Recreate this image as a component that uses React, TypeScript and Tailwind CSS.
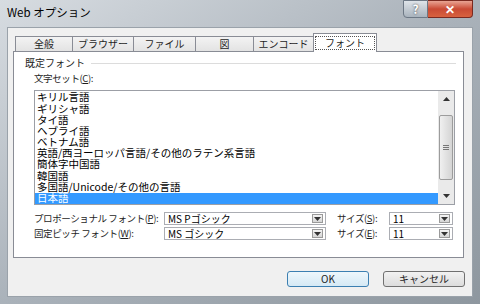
import React from "react";

const font = { fontFamily: '"Noto Sans CJK JP", "Noto Sans", sans-serif' };

const charsets = [
  "キリル言語",
  "ギリシャ語",
  "タイ語",
  "ヘブライ語",
  "ベトナム語",
  "英語/西ヨーロッパ言語/その他のラテン系言語",
  "簡体字中国語",
  "韓国語",
  "多国語/Unicode/その他の言語",
  "日本語",
];

const tabs = [
  { label: "全般", w: "w-[58px]" },
  { label: "ブラウザー", w: "w-[62px]" },
  { label: "ファイル", w: "w-[63px]" },
  { label: "図", w: "w-[59px]" },
  { label: "エンコード", w: "w-[61px]" },
];

function Arrow({ up = false }: { up?: boolean }) {
  return (
    <svg width="7" height="4" viewBox="0 0 7 4">
      <path d={up ? "M0 4 L3.5 0 L7 4 Z" : "M0 0 L7 0 L3.5 4 Z"} fill="#333" />
    </svg>
  );
}

function Combo({ value, width }: { value: string; width: string }) {
  return (
    <div className={`flex h-[13px] items-center border border-[#abadb3] bg-white ${width}`}>
      <span className="flex-1 whitespace-nowrap pl-[3px] text-[10px] leading-none text-black">{value}</span>
      <span className="mr-[2px] flex h-[9px] w-[11px] items-center justify-center border border-[#9a9a9a] bg-gradient-to-b from-[#f4f4f4] to-[#d6d6d6]">
        <Arrow />
      </span>
    </div>
  );
}

function Label({ text, k, rest }: { text: string; k: string; rest?: string }) {
  return (
    <span className="whitespace-nowrap text-[9.5px] leading-none tracking-[-0.4px] text-[#1e1e1e]">
      {text}(<span className="underline">{k}</span>){rest ?? ":"}
    </span>
  );
}

export default function App() {
  return (
    <div
      style={font}
      className="flex h-[304px] w-[480px] flex-col bg-gradient-to-br from-[#d7dce1] via-[#aab2ba] to-[#8e979f]"
    >
      {/* title bar */}
      <div className="flex h-[27px] items-start justify-between">
        <span className="whitespace-nowrap pl-[7px] pt-[4px] text-[11.5px] leading-[16px] text-black">Web オプション</span>
        <div className="mr-[7px] flex">
          <span className="flex h-[18px] w-[25px] items-center justify-center rounded-bl-[4px] border border-[#6d7885] bg-gradient-to-b from-[#dfe4e9] to-[#a9b3bd] text-[12px] font-bold leading-none text-white [text-shadow:0_0_2px_#333]">
            ?
          </span>
          <span className="flex h-[18px] w-[45px] items-center justify-center rounded-br-[4px] border border-l-0 border-[#7a2a20] bg-gradient-to-b from-[#e8a393] via-[#c94a34] to-[#d8623f] text-[12px] font-bold leading-none text-white">
            ✕
          </span>
        </div>
      </div>

      {/* client area */}
      <div className="mx-[7px] mb-[7px] flex flex-1 flex-col border border-[#9aa2aa] bg-[#f0f0f0]">
        {/* tabs */}
        <div className="flex h-[23px] items-end pl-[7px]">
          {tabs.map((t) => (
            <div
              key={t.label}
              className={`-mr-px flex h-[15px] items-center justify-center whitespace-nowrap border border-b-0 border-[#898c95] bg-gradient-to-b from-[#f3f3f3] to-[#e3e3e3] text-[10px] leading-none text-[#1e1e1e] ${t.w}`}
            >
              {t.label}
            </div>
          ))}
          <div className="relative z-10 -mb-px flex h-[19px] w-[64px] items-center justify-center border border-b-0 border-[#898c95] bg-white">
            <span className="whitespace-nowrap border border-dotted border-[#555] px-[9px] text-[10px] leading-[12px] text-[#1e1e1e]">
              フォント
            </span>
          </div>
        </div>

        {/* panel */}
        <div className="ml-[5px] flex h-[207px] w-[451px] flex-col border border-[#898c95] bg-white">
          <div className="mt-[5px] flex h-[12px] items-center pl-[11px] pr-[7px]">
            <span className="whitespace-nowrap text-[10px] leading-none text-[#1e1e1e]">既定フォント</span>
            <div className="ml-[6px] h-px flex-1 bg-[#dcdcdc]" />
          </div>
          <div className="flex flex-col pl-[20px]">
            <div className="mt-[4px] flex h-[12px] items-center">
              <Label text="文字セット" k="C" />
            </div>
            {/* listbox */}
            <div className="mt-[5px] flex h-[115px] w-[421px] border border-[#9c9fa6] bg-white">
              <div className="flex flex-1 flex-col pt-[1px]">
                {charsets.map((c) => (
                  <div
                    key={c}
                    className={`flex h-[11.2px] items-center whitespace-nowrap pl-[2px] text-[10.5px] leading-none ${
                      c === "日本語" ? "bg-[#3399ff] text-white" : "text-black"
                    }`}
                  >
                    {c}
                  </div>
                ))}
              </div>
              <div className="flex w-[16px] flex-col bg-[#eaeaea]">
                <div className="flex h-[16px] items-center justify-center">
                  <Arrow up />
                </div>
                <div className="mx-[1px] mt-[8px] flex h-[65px] flex-col items-center justify-center gap-[1px] rounded-[2px] border border-[#9c9c9c] bg-gradient-to-r from-[#f0f0f0] to-[#d4d4d4]">
                  <div className="h-px w-[6px] bg-[#777]" />
                  <div className="h-px w-[6px] bg-[#777]" />
                  <div className="h-px w-[6px] bg-[#777]" />
                </div>
                <div className="flex-1" />
                <div className="flex h-[16px] items-center justify-center">
                  <Arrow />
                </div>
              </div>
            </div>

            {/* font rows */}
            <div className="mt-[7px] flex h-[13px] items-center">
              <div className="flex w-[130px] items-center">
                <Label text="プロポーショナル フォント" k="P" />
              </div>
              <Combo value="MS Pゴシック" width="w-[162px]" />
              <div className="ml-[11px] flex w-[52px] items-center">
                <Label text="サイズ" k="S" />
              </div>
              <Combo value="11" width="w-[64px]" />
            </div>
            <div className="mt-[2px] flex h-[13px] items-center">
              <div className="flex w-[130px] items-center">
                <Label text="固定ピッチ フォント" k="W" />
              </div>
              <Combo value="MS ゴシック" width="w-[162px]" />
              <div className="ml-[11px] flex w-[52px] items-center">
                <Label text="サイズ" k="E" />
              </div>
              <Combo value="11" width="w-[64px]" />
            </div>
          </div>
        </div>

        {/* buttons */}
        <div className="flex justify-end gap-[14px] pr-[7px] pt-[13px]">
          <button className="h-[16px] w-[82px] rounded-[3px] border border-[#3c7fb1] bg-gradient-to-b from-[#eef7fc] to-[#d5e9f5] text-[10px] leading-none text-[#1e1e1e]">
            OK
          </button>
          <button className="h-[16px] w-[82px] rounded-[3px] border border-[#707070] bg-gradient-to-b from-[#f2f2f2] to-[#dcdcdc] text-[10px] leading-none text-[#1e1e1e]">
            キャンセル
          </button>
        </div>
      </div>
    </div>
  );
}
